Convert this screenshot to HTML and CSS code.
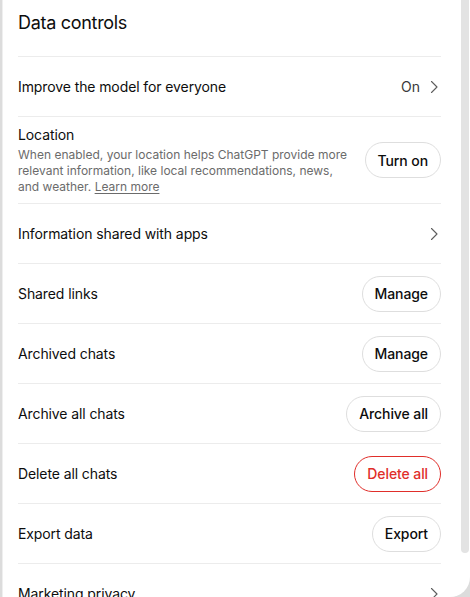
FILE: index.html
```html
<!DOCTYPE html>
<html lang="en">
<head>
<meta charset="utf-8">
<title>Data controls</title>
<link rel="stylesheet" href="styles.css">
</head>
<body>
<div class="panel">
  <div class="content">
    <h2 class="title">Data controls</h2>
    <div class="row">
      <span class="label">Improve the model for everyone</span>
      <span class="value">On
        <svg class="chev" viewBox="0 0 16 16" width="16" height="16"><path d="M6.5 2.5 12 8 6.5 13.5" fill="none" stroke="currentColor" stroke-width="1.1" stroke-linecap="round" stroke-linejoin="round"/></svg>
      </span>
    </div>
    <div class="row row-tall">
      <div class="text-col">
        <div class="label">Location</div>
        <div class="desc">When enabled, your location helps ChatGPT provide more relevant information, like local recommendations, news, and weather. <a class="link" href="#">Learn more</a></div>
      </div>
      <button class="btn">Turn on</button>
    </div>
    <div class="row">
      <span class="label">Information shared with apps</span>
      <svg class="chev" viewBox="0 0 16 16" width="16" height="16"><path d="M6.5 2.5 12 8 6.5 13.5" fill="none" stroke="currentColor" stroke-width="1.1" stroke-linecap="round" stroke-linejoin="round"/></svg>
    </div>
    <div class="row">
      <span class="label">Shared links</span>
      <button class="btn">Manage</button>
    </div>
    <div class="row">
      <span class="label">Archived chats</span>
      <button class="btn">Manage</button>
    </div>
    <div class="row">
      <span class="label">Archive all chats</span>
      <button class="btn">Archive all</button>
    </div>
    <div class="row">
      <span class="label">Delete all chats</span>
      <button class="btn btn-danger">Delete all</button>
    </div>
    <div class="row">
      <span class="label">Export data</span>
      <button class="btn">Export</button>
    </div>
    <div class="row">
      <span class="label">Marketing privacy</span>
      <svg class="chev" viewBox="0 0 16 16" width="16" height="16"><path d="M6.5 2.5 12 8 6.5 13.5" fill="none" stroke="currentColor" stroke-width="1.1" stroke-linecap="round" stroke-linejoin="round"/></svg>
    </div>
  </div>
  <div class="scroll-thumb"></div>
</div>
</body>
</html>
```
FILE: styles.css
```css
* { box-sizing: border-box; }
html, body { margin: 0; padding: 0; }
body {
  width: 470px;
  height: 597px;
  background: #dcdcdc;
  font-family: Inter, "Noto Sans", "Liberation Sans", sans-serif;
  color: #0d0d0d;
  overflow: hidden;
}
.panel {
  position: relative;
  width: 468px;
  height: 597px;
  margin-left: 2px;
  background: #fff;
  border-left: 1px solid #efefef;
  border-bottom-right-radius: 20px;
  overflow: hidden;
}
.content {
  padding: 0 29px 0 15px;
}
.title {
  margin: 0;
  font-size: 18px;
  line-height: 28px;
  font-weight: 400;
  padding: 9px 0 19px;
  border-bottom: 1px solid #ececec;
  letter-spacing: -0.3px;
}
.row {
  display: flex;
  align-items: center;
  justify-content: space-between;
  gap: 16px;
  min-height: 60px;
  border-bottom: 1px solid #ececec;
}
.row-tall {
  padding: 8px 0;
}
.label {
  font-size: 14px;
  line-height: 20px;
  letter-spacing: -0.1px;
}
.text-col {
  flex: 1;
  min-width: 0;
}
.desc {
  font-size: 12px;
  line-height: 16px;
  color: #6b6b6b;
  margin-top: 2px;
  max-width: 336px;
}
.link {
  color: #6b6b6b;
  text-decoration: underline;
  text-underline-offset: 2px;
}
.value {
  display: flex;
  align-items: center;
  gap: 5px;
  font-size: 14px;
  color: #3a3a3a;
}
.chev {
  color: #5d5d5d;
  flex-shrink: 0;
}
.btn {
  flex-shrink: 0;
  height: 36px;
  padding: 0 12px;
  border-radius: 999px;
  border: 1px solid #dedede;
  background: #fff;
  font-family: inherit;
  font-size: 14px;
  font-weight: 500;
  letter-spacing: -0.1px;
  color: #0d0d0d;
}
.btn-danger {
  color: #e02e2a;
  border-color: #e02e2a;
}
.scroll-thumb {
  position: absolute;
  top: -4px;
  right: 1px;
  width: 8px;
  height: 557px;
  background: #e3e3e3;
  border-radius: 4px;
}
```
